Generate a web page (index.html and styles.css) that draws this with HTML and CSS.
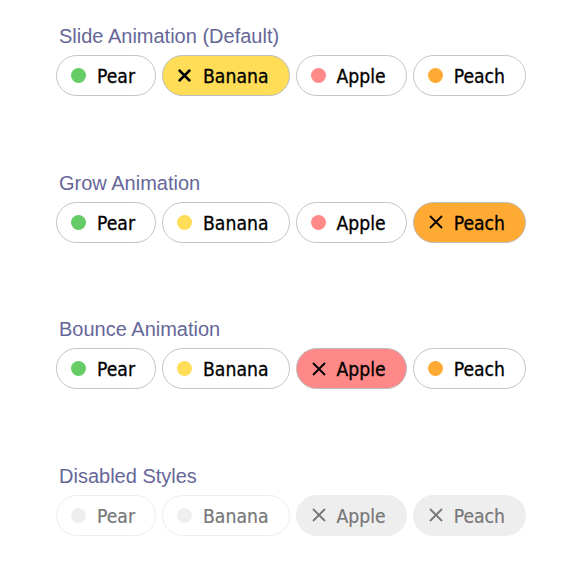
FILE: index.html
```html
<!DOCTYPE html>
<html>
<head>
<meta charset="utf-8">
<link rel="stylesheet" href="styles.css">
</head>
<body>
<div class="page">
  <section class="group">
    <h2 class="title">Slide Animation (Default)</h2>
    <div class="chips">
      <span class="chip"><span class="dot pear"></span><span class="label">Pear</span></span>
      <span class="chip sel banana-bg"><svg class="x bold" viewBox="0 0 16 16"><path d="M2 2L14 14M14 2L2 14"/></svg><span class="label">Banana</span></span>
      <span class="chip"><span class="dot apple"></span><span class="label">Apple</span></span>
      <span class="chip"><span class="dot peach"></span><span class="label">Peach</span></span>
    </div>
  </section>
  <section class="group">
    <h2 class="title">Grow Animation</h2>
    <div class="chips">
      <span class="chip"><span class="dot pear"></span><span class="label">Pear</span></span>
      <span class="chip"><span class="dot banana"></span><span class="label">Banana</span></span>
      <span class="chip"><span class="dot apple"></span><span class="label">Apple</span></span>
      <span class="chip sel peach-bg"><svg class="x" viewBox="0 0 16 16"><path d="M2 2L14 14M14 2L2 14"/></svg><span class="label">Peach</span></span>
    </div>
  </section>
  <section class="group">
    <h2 class="title">Bounce Animation</h2>
    <div class="chips">
      <span class="chip"><span class="dot pear"></span><span class="label">Pear</span></span>
      <span class="chip"><span class="dot banana"></span><span class="label">Banana</span></span>
      <span class="chip sel apple-bg"><svg class="x" viewBox="0 0 16 16"><path d="M2 2L14 14M14 2L2 14"/></svg><span class="label">Apple</span></span>
      <span class="chip"><span class="dot peach"></span><span class="label">Peach</span></span>
    </div>
  </section>
  <section class="group">
    <h2 class="title">Disabled Styles</h2>
    <div class="chips disabled">
      <span class="chip"><span class="dot"></span><span class="label">Pear</span></span>
      <span class="chip"><span class="dot"></span><span class="label">Banana</span></span>
      <span class="chip sel"><svg class="x" viewBox="0 0 16 16"><path d="M2 2L14 14M14 2L2 14"/></svg><span class="label">Apple</span></span>
      <span class="chip sel"><svg class="x" viewBox="0 0 16 16"><path d="M2 2L14 14M14 2L2 14"/></svg><span class="label">Peach</span></span>
    </div>
  </section>
</div>
</body>
</html>
```

FILE: styles.css
```css
* { box-sizing: border-box; }
html, body { margin: 0; padding: 0; background: #fff; }
.page {
  padding: 25px 0 0 56px;
}
.group {
  height: 146.5px;
}
.group:last-child { height: auto; }
.title {
  margin: 0 0 7px 3px;
  font-family: "Liberation Sans", Arial, sans-serif;
  font-size: 20px;
  font-weight: normal;
  line-height: 23px;
  color: #666699;
}
.chips {
  display: flex;
  gap: 6px;
}
.chip {
  display: inline-flex;
  align-items: center;
  height: 41px;
  padding: 0 20px 0 14px;
  border: 1px solid #c4c4c4;
  border-radius: 21px;
  background: #fff;
  font-family: "DejaVu Sans", sans-serif;
  font-stretch: condensed;
  font-size: 19.2px;
  color: #000;
  -webkit-text-stroke: 0.3px currentColor;
}
.label { position: relative; top: 1px; }
.dot {
  width: 15px;
  height: 15px;
  border-radius: 50%;
  margin-right: 11px;
  background: #eee;
}
.pear { background: #66cc66; }
.banana { background: #ffdd57; }
.apple { background: #ff8888; }
.peach { background: #ffaa33; }
.x {
  width: 16px;
  height: 16px;
  margin-right: 10px;
  fill: none;
  stroke: #000;
  stroke-width: 1.8;
}
.x.bold { width: 15px; height: 15px; margin-right: 11px; stroke-width: 3; }
.sel { border-color: #bdbdbd; }
.banana-bg { background: #ffdd57; }
.peach-bg { background: #ffaa33; }
.apple-bg { background: #ff8888; }
.disabled .chip {
  color: #777;
  border-color: #eee;
  -webkit-text-stroke: 0.2px currentColor;
}
.disabled .chip.sel {
  background: #eee;
  border-color: #eee;
}
.disabled .x { stroke: #777; }
```
